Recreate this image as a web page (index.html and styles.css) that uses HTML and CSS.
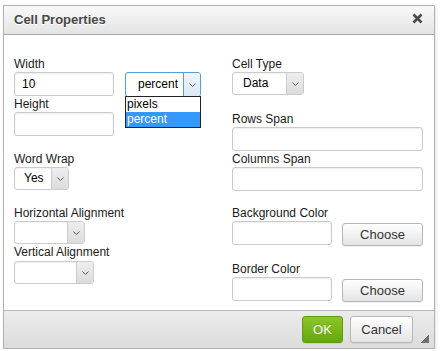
FILE: index.html
```html
<!DOCTYPE html>
<html lang="en">
<head>
    <meta charset="UTF-8">
    <title>Cell Properties</title>
    <link rel="stylesheet" href="styles.css">
</head>
<body>
    <div class="dialog">
        <div class="title-bar">
            <span class="title">Cell Properties</span>
            <a class="close" title="Close">
                <svg width="11" height="11" viewBox="0 0 11 11">
                    <path d="M1.5 1.5L9.5 9.5M9.5 1.5L1.5 9.5" stroke="#4a4a4a" stroke-width="2.6" fill="none"/>
                </svg>
            </a>
        </div>
        <div class="dialog-body">
            <div class="col">
                <div class="group">
                    <label>Width</label>
                    <div class="row">
                        <input type="text" class="text-input w100" value="10">
                        <div class="select select-unit focused">
                            <span class="value">percent</span>
                            <span class="arrow"><svg width="7" height="4" viewBox="0 0 7 4"><polyline points="0.5,0.5 3.5,3.5 6.5,0.5" fill="none" stroke="#555"/></svg></span>
                            <ul class="options">
                                <li>pixels</li>
                                <li class="selected">percent</li>
                            </ul>
                        </div>
                    </div>
                    <label>Height</label>
                    <input type="text" class="text-input w100">
                </div>
                <div class="group">
                    <label>Word Wrap</label>
                    <div class="select select-wrap">
                        <span class="value">Yes</span>
                        <span class="arrow"><svg width="7" height="4" viewBox="0 0 7 4"><polyline points="0.5,0.5 3.5,3.5 6.5,0.5" fill="none" stroke="#555"/></svg></span>
                    </div>
                </div>
                <div class="group">
                    <label>Horizontal Alignment</label>
                    <div class="select select-halign">
                        <span class="value"></span>
                        <span class="arrow"><svg width="7" height="4" viewBox="0 0 7 4"><polyline points="0.5,0.5 3.5,3.5 6.5,0.5" fill="none" stroke="#555"/></svg></span>
                    </div>
                    <label class="tight">Vertical Alignment</label>
                    <div class="select select-valign">
                        <span class="value"></span>
                        <span class="arrow"><svg width="7" height="4" viewBox="0 0 7 4"><polyline points="0.5,0.5 3.5,3.5 6.5,0.5" fill="none" stroke="#555"/></svg></span>
                    </div>
                </div>
            </div>
            <div class="col">
                <div class="group">
                    <label>Cell Type</label>
                    <div class="select select-type">
                        <span class="value">Data</span>
                        <span class="arrow"><svg width="7" height="4" viewBox="0 0 7 4"><polyline points="0.5,0.5 3.5,3.5 6.5,0.5" fill="none" stroke="#555"/></svg></span>
                    </div>
                </div>
                <div class="group group-span">
                    <label>Rows Span</label>
                    <input type="text" class="text-input full">
                    <label class="tight">Columns Span</label>
                    <input type="text" class="text-input full">
                </div>
                <div class="group group-bg">
                    <label>Background Color</label>
                    <div class="row">
                        <input type="text" class="text-input w100">
                        <button class="btn choose">Choose</button>
                    </div>
                </div>
                <div class="group">
                    <label>Border Color</label>
                    <div class="row">
                        <input type="text" class="text-input w100">
                        <button class="btn choose">Choose</button>
                    </div>
                </div>
            </div>
        </div>
        <div class="footer">
            <button class="btn ok">OK</button>
            <button class="btn cancel">Cancel</button>
            <span class="grip"></span>
        </div>
    </div>
</body>
</html>
```

FILE: styles.css
```css
*{
    margin: 0;
    padding: 0;
    box-sizing: border-box;
    font-family: "Liberation Sans", Arial, sans-serif;
}
body{
    background: #fff;
}
.dialog{
    width: 432px;
    height: 344px;
    margin: 5px 0 0 3px;
    border: 1px solid #b2b2b2;
    background: #fff;
    box-shadow: 1px 1px 3px rgba(0,0,0,0.12);
    display: flex;
    flex-direction: column;
}
.title-bar{
    height: 29px;
    display: flex;
    align-items: center;
    justify-content: space-between;
    padding: 0 10px 1px 10px;
    border-bottom: 1px solid #a8a8a8;
    background: linear-gradient(#f9f9f9, #e4e4e4);
}
.title-bar .title{
    font-size: 13px;
    font-weight: bold;
    color: #474747;
    text-shadow: 0 1px 0 #fff;
}
.title-bar .close{
    display: flex;
    margin-right: 1px;
    margin-top: -2px;
}
.dialog-body{
    height: 275px;
    padding: 22px 11px 0 10px;
    display: grid;
    grid-template-columns: 218px 191px;
}
.col{
    display: flex;
    flex-direction: column;
}
.group{
    display: flex;
    flex-direction: column;
    align-items: flex-start;
    margin-bottom: 16px;
}
.group-span{
    margin-top: 1px;
}
.group-bg{
    margin-top: -1px;
}
label{
    display: block;
    font-size: 12px;
    line-height: 15px;
    color: #1a1a1a;
}
label.tight{
    margin-top: 1px;
}
.row{
    display: flex;
    align-items: flex-start;
    width: 100%;
}
.text-input{
    height: 24px;
    border: 1px solid #c9cccf;
    border-radius: 3px;
    box-shadow: inset 0 1px 2px rgba(0,0,0,0.08);
    padding: 0 7px;
    font-size: 12px;
    color: #000;
    outline: none;
    background: #fff;
}
.text-input.w100{
    width: 100px;
}
.text-input.full{
    width: 191px;
}
.select{
    position: relative;
    display: flex;
    height: 23px;
    border: 1px solid #c9cccf;
    border-radius: 3px;
    background: #fff;
    box-shadow: inset 0 1px 2px rgba(0,0,0,0.06);
}
.select .value{
    flex: 1;
    font-size: 12px;
    line-height: 21px;
    padding-left: 9px;
    color: #000;
}
.select .arrow{
    width: 17px;
    display: flex;
    align-items: center;
    justify-content: center;
    border-left: 1px solid #c9cccf;
    border-radius: 0 2px 2px 0;
    background: linear-gradient(#eeeeee, #dcdcdc);
}
.select-unit{
    width: 76px;
    height: 25px;
    margin-left: 11px;
}
.select-unit .value{
    line-height: 23px;
    padding-left: 12px;
}
.select.focused{
    border-color: #5b9bd8;
}
.select.focused .arrow{
    border-left-color: #5b9bd8;
    background: linear-gradient(#eef5fc, #dce9f6);
}
.select-wrap{
    width: 55px;
}
.select-halign{
    width: 71px;
}
.select-valign{
    width: 80px;
    margin-top: 1px;
}
.select-type{
    width: 72px;
}
.select-type .value{
    padding-left: 10px;
}
.options{
    position: absolute;
    top: 100%;
    left: -1px;
    width: 76px;
    list-style: none;
    border: 1px solid #222;
    background: #fff;
    z-index: 5;
}
.options li{
    font-size: 12px;
    line-height: 15px;
    padding-left: 1px;
    color: #000;
}
.options li.selected{
    background: #3399ff;
    color: #fff;
}
.btn{
    font-size: 13px;
    color: #333;
    border: 1px solid #b6b6b6;
    border-radius: 3px;
    background: linear-gradient(#ffffff, #e4e4e4);
    box-shadow: 0 1px 0 rgba(0,0,0,0.06);
    cursor: pointer;
}
.btn.choose{
    width: 81px;
    height: 23px;
    margin-left: 10px;
    margin-top: 2px;
}
.footer{
    height: 38px;
    display: flex;
    align-items: flex-start;
    justify-content: flex-end;
    padding: 5px 5px 0 0;
    border-top: 1px solid #b9b9b9;
    background: linear-gradient(#ececec, #dcdcdc);
}
.btn.ok{
    width: 41px;
    height: 27px;
    color: #fff;
    border-color: #5c9a10;
    background: linear-gradient(#8fc628, #62a80c);
    text-shadow: 0 -1px 0 rgba(0,0,0,0.15);
}
.btn.cancel{
    width: 63px;
    height: 27px;
    margin-left: 7px;
}
.grip{
    width: 8px;
    height: 8px;
    margin-left: 8px;
    margin-top: 19px;
    background: linear-gradient(to bottom right, transparent 50%, #707070 50%);
}
```
